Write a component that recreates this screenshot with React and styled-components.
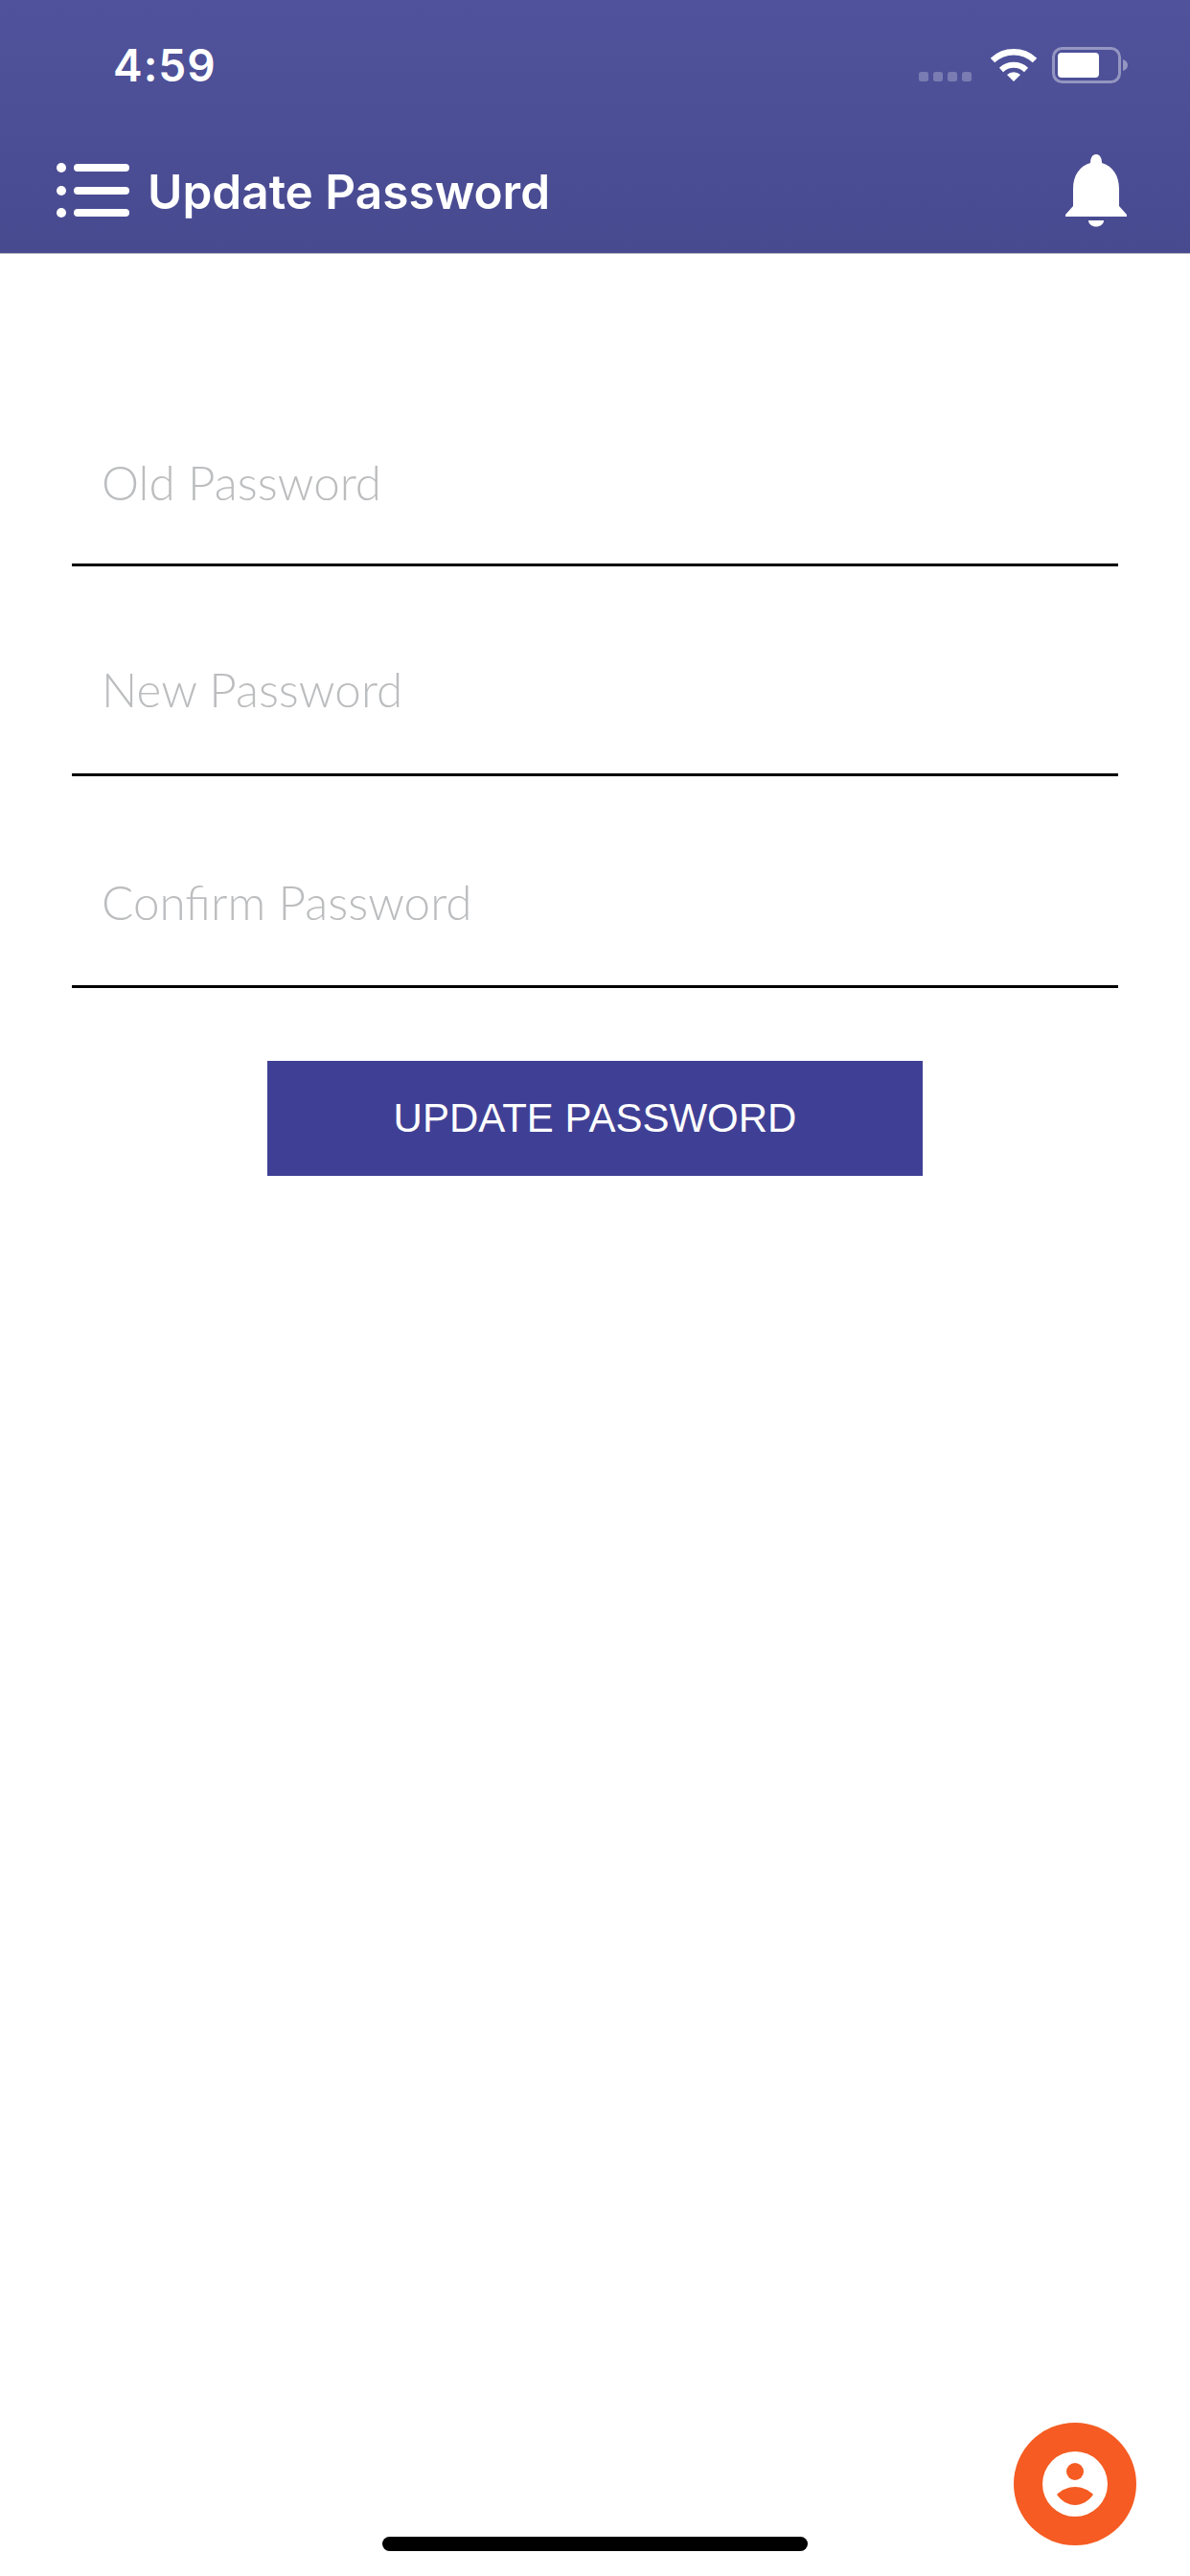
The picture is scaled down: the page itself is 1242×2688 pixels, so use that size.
import React from "react";
import styled, { createGlobalStyle } from "styled-components";

const Global = createGlobalStyle`
  html, body { margin: 0; padding: 0; background: #fff; }
  * { box-sizing: border-box; }
`;

const Page = styled.div`
  position: relative;
  width: 1242px;
  height: 2688px;
  background: #fff;
  overflow: hidden;
  display: flex;
  flex-direction: column;
`;

const Header = styled.header`
  height: 265px;
  flex: none;
  background: linear-gradient(180deg, #50539b 0%, #484a90 100%);
  border-bottom: 1px solid #b8b8c0;
  display: flex;
  flex-direction: column;
`;

const StatusBar = styled.div`
  height: 136px;
  padding: 45px 65px 0 118px;
  display: flex;
  justify-content: space-between;
  align-items: flex-start;
`;

const Time = styled.span`
  font-family: Inter, "Liberation Sans", sans-serif;
  font-size: 46px;
  line-height: 46px;
  font-weight: 600;
  letter-spacing: 1px;
  color: #fff;
`;

const StatusIcons = styled.div`
  display: flex;
  align-items: flex-start;
  padding-top: 4px;
  gap: 16px;
`;

const NavBar = styled.div`
  flex: 1;
  padding: 0 65px 0 59px;
  display: flex;
  align-items: flex-start;
`;

const MenuButton = styled.div`
  margin-top: 34px;
  line-height: 0;
`;

const Title = styled.h1`
  margin: 34px auto 0 19px;
  font-family: Inter, Roboto, sans-serif;
  font-size: 49.5px;
  line-height: 60px;
  font-weight: 600;
  color: #fff;
`;

const BellButton = styled.div`
  margin-top: 25px;
  line-height: 0;
`;

const Form = styled.form`
  padding: 0 75px;
  display: flex;
  flex-direction: column;
  align-items: center;
  margin-top: 132px;
`;

const Field = styled.div`
  width: 100%;
  height: ${(p) => p.$height}px;
  display: flex;
  align-items: flex-start;
  padding: ${(p) => p.$top}px 0 0 31px;
  border-bottom: 3px solid #000;
`;

const Placeholder = styled.span`
  font-family: Lato, "Open Sans", sans-serif;
  font-weight: 300;
  font-size: 49.4px;
  line-height: 56px;
  color: #bcbdbf;
`;

const SubmitButton = styled.div`
  width: 684px;
  height: 120px;
  margin-top: 76px;
  background: #3f4095;
  display: flex;
  align-items: center;
  justify-content: center;
  font-family: "Liberation Sans", Arial, sans-serif;
  font-size: 42px;
  color: #fff;
`;

const Fab = styled.div`
  position: absolute;
  left: 1058px;
  top: 2528px;
  width: 128px;
  height: 128px;
  border-radius: 50%;
  background: #f55b22;
  display: flex;
  align-items: center;
  justify-content: center;
`;

const HomeIndicator = styled.div`
  position: absolute;
  left: 399px;
  top: 2647px;
  width: 444px;
  height: 15px;
  border-radius: 8px;
  background: #000;
`;

const Signal = () => (
  <svg width="59" height="36" viewBox="0 0 59 36">
    {[0, 15, 30, 45].map((x) => (
      <rect key={x} x={x} y="26" width="10" height="10" rx="2.5" fill="#fff" opacity="0.25" />
    ))}
  </svg>
);

const Wifi = () => (
  <svg width="48" height="36" viewBox="0 0 48 36">
    <path d="M2 14 A32 32 0 0 1 46 14" fill="none" stroke="#fff" strokeWidth="6.5" />
    <path d="M11 24 A19 19 0 0 1 37 24" fill="none" stroke="#fff" strokeWidth="6" />
    <path d="M17 29 A10 10 0 0 1 31 29 L24 36 Z" fill="#fff" />
  </svg>
);

const Battery = () => (
  <svg width="79" height="38" viewBox="0 0 79 38">
    <rect x="1.5" y="1.5" width="69" height="35" rx="9" fill="none" stroke="#fff" strokeOpacity="0.4" strokeWidth="3" />
    <rect x="6" y="6" width="43" height="26" rx="4" fill="#fff" />
    <path d="M74 13 C77 14 79 16 79 19 C79 22 77 24 74 25 Z" fill="#fff" fillOpacity="0.4" />
  </svg>
);

const MenuIcon = () => (
  <svg width="76" height="58" viewBox="0 0 76 58" fill="#fff">
    <circle cx="5" cy="5" r="5" />
    <circle cx="5" cy="29" r="5" />
    <circle cx="5" cy="52" r="5" />
    <rect x="18" y="1" width="58" height="8" rx="4" />
    <rect x="18" y="25" width="58" height="8" rx="4" />
    <rect x="18" y="48" width="58" height="8" rx="4" />
  </svg>
);

const BellIcon = () => (
  <svg width="66" height="76" viewBox="0 0 66 76" fill="#fff">
    <path d="M27 9 C27 4 29 0 33 0 C37 0 39 4 39 9 C50 12 57 22 57 36 L57 54 L65 63 L65 65 L1 65 L1 63 L9 54 L9 36 C9 22 16 12 27 9 Z" />
    <path d="M25 69 L41 69 C41 73 37 75.500 33 75.500 C29 75.500 25 73 25 69 Z" />
  </svg>
);

const ProfileIcon = () => (
  <svg width="68" height="68" viewBox="0 0 68 68">
    <circle cx="34" cy="34" r="34" fill="#fff" />
    <circle cx="34" cy="21" r="9" fill="#f55b22" />
    <path d="M15 45 C20 40 27 37 34 37 C41 37 48 40 53 45 C48 52 41 56 34 56 C27 56 20 52 15 45 Z" fill="#f55b22" />
  </svg>
);

export default function App() {
  return (
    <>
      <Global />
      <Page>
        <Header>
          <StatusBar>
            <Time>4:59</Time>
            <StatusIcons>
              <Signal />
              <Wifi />
              <Battery />
            </StatusIcons>
          </StatusBar>
          <NavBar>
            <MenuButton>
              <MenuIcon />
            </MenuButton>
            <Title>Update Password</Title>
            <BellButton>
              <BellIcon />
            </BellButton>
          </NavBar>
        </Header>
        <Form>
          <Field $height={194} $top={78}>
            <Placeholder>Old Password</Placeholder>
          </Field>
          <Field $height={219} $top={100}>
            <Placeholder>New Password</Placeholder>
          </Field>
          <Field $height={221} $top={103}>
            <Placeholder>Confirm Password</Placeholder>
          </Field>
          <SubmitButton>UPDATE PASSWORD</SubmitButton>
        </Form>
        <Fab>
          <ProfileIcon />
        </Fab>
        <HomeIndicator />
      </Page>
    </>
  );
}
